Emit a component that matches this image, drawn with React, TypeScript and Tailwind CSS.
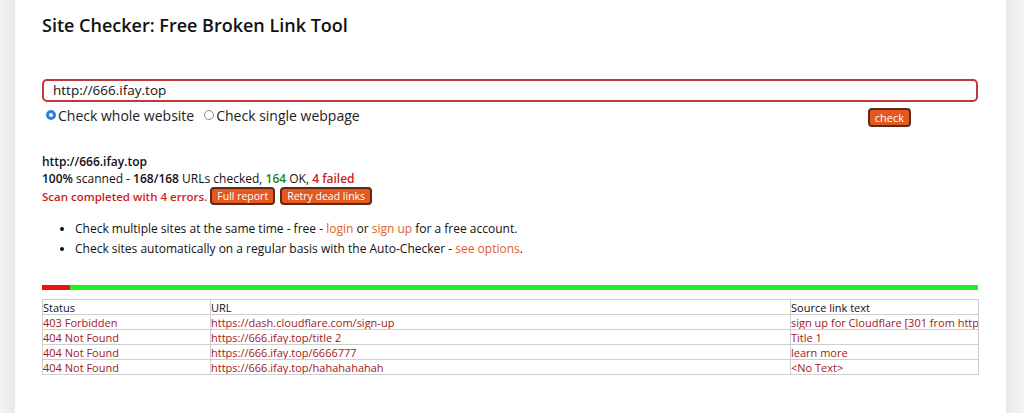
import React from 'react';

const rows = [
  { status: '403 Forbidden', url: 'https://dash.cloudflare.com/sign-up', text: 'sign up for Cloudflare [301 from https://www.cloudflare.com/sign-up]' },
  { status: '404 Not Found', url: 'https://666.ifay.top/title 2', text: 'Title 1' },
  { status: '404 Not Found', url: 'https://666.ifay.top/6666777', text: 'learn more' },
  { status: '404 Not Found', url: 'https://666.ifay.top/hahahahahah', text: '<No Text>' },
];

const btn =
  'bg-[#e4581e] text-white border-2 border-[#5a2a1a] rounded-[4px] leading-none';

export default function App() {
  return (
    <div className="flex w-[1024px] h-[413px] bg-[#f2f2f2] font-['Open_Sans',sans-serif] text-[#111]">
      <div className="w-[15px] bg-gradient-to-r from-[#f3f3f3] to-[#e9e9e9]" />
      <div className="w-[991px] bg-white pl-[27px] pr-[28px] pt-[12px]">
        <h1 className="text-[18px] font-semibold leading-[26px]">Site Checker: Free Broken Link Tool</h1>

        <div className="mt-[41px] h-[23px] border-2 border-[#c1363b] rounded-[5px] flex items-center pl-[9px] text-[13.5px]">
          http://666.ifay.top
        </div>
        <div className="flex items-center h-[26px] text-[14px] text-[#222]">
          <span className="ml-[4px] w-[10px] h-[10px] rounded-full border-[3px] border-[#2a7fe0] bg-white" />
          <span className="ml-[2px]">Check whole website</span>
          <span className="ml-[10px] w-[10px] h-[10px] rounded-full border border-[#888] bg-white" />
          <span className="ml-[2px]">Check single webpage</span>
          <button className={`${btn} ml-auto mr-[67px] mt-[4px] h-[19px] px-[5px] text-[11px]`}>check</button>
        </div>

        <div className="mt-[25px] text-[12px] leading-[17px]">
          <div className="font-semibold">http://666.ifay.top</div>
          <div>
            <span className="font-semibold">100%</span> scanned - <span className="font-semibold">168/168</span> URLs checked,{' '}
            <span className="font-semibold text-[#1e8a1e]">164</span> OK, <span className="font-semibold text-[#cc1c1c]">4 failed</span>
          </div>
          <div className="flex items-center gap-[3px] h-[18px]">
            <span className="text-[#cc1c1c] font-semibold text-[11.5px]">Scan completed with 4 errors.</span>
            <button className={`${btn} h-[18px] px-[5px] text-[10.5px]`}>Full report</button>
            <button className={`${btn} h-[18px] px-[5px] text-[10.5px] ml-[2px]`}>Retry dead links</button>
          </div>
          <ul className="list-disc pl-[33px] mt-[14px] leading-[20px] text-[12px]">
            <li>
              Check multiple sites at the same time - free - <span className="text-[#e0602e]">login</span> or{' '}
              <span className="text-[#e0602e]">sign up</span> for a free account.
            </li>
            <li>
              Check sites automatically on a regular basis with the Auto-Checker - <span className="text-[#e0602e]">see options</span>.
            </li>
          </ul>
        </div>

        <div className="mt-[26px] flex h-[5px]">
          <div className="w-[28px] bg-[#ee1111]" />
          <div className="flex-1 bg-[#22ee22]" />
        </div>

        <table className="mt-[9px] w-[936px] table-fixed border-collapse text-[11px] leading-[13px]">
          <colgroup>
            <col className="w-[168px]" />
            <col className="w-[580px]" />
            <col className="w-[188px]" />
          </colgroup>
          <thead>
            <tr>
              <th className="border border-[#cfcfcf] text-left font-normal px-0 h-[15px] whitespace-nowrap overflow-hidden">Status</th>
              <th className="border border-[#cfcfcf] text-left font-normal px-0 whitespace-nowrap overflow-hidden">URL</th>
              <th className="border border-[#cfcfcf] text-left font-normal px-0 whitespace-nowrap overflow-hidden">Source link text</th>
            </tr>
          </thead>
          <tbody className="text-[#a01818]">
            {rows.map((r, i) => (
              <tr key={i}>
                <td className="border border-[#cfcfcf] h-[15px] whitespace-nowrap overflow-hidden">{r.status}</td>
                <td className="border border-[#cfcfcf] whitespace-nowrap overflow-hidden">{r.url}</td>
                <td className="border border-[#cfcfcf] whitespace-nowrap overflow-hidden">{r.text}</td>
              </tr>
            ))}
          </tbody>
        </table>
      </div>
      <div className="flex-1 bg-gradient-to-r from-[#e8e8e8] to-[#f4f4f4]" />
    </div>
  );
}
